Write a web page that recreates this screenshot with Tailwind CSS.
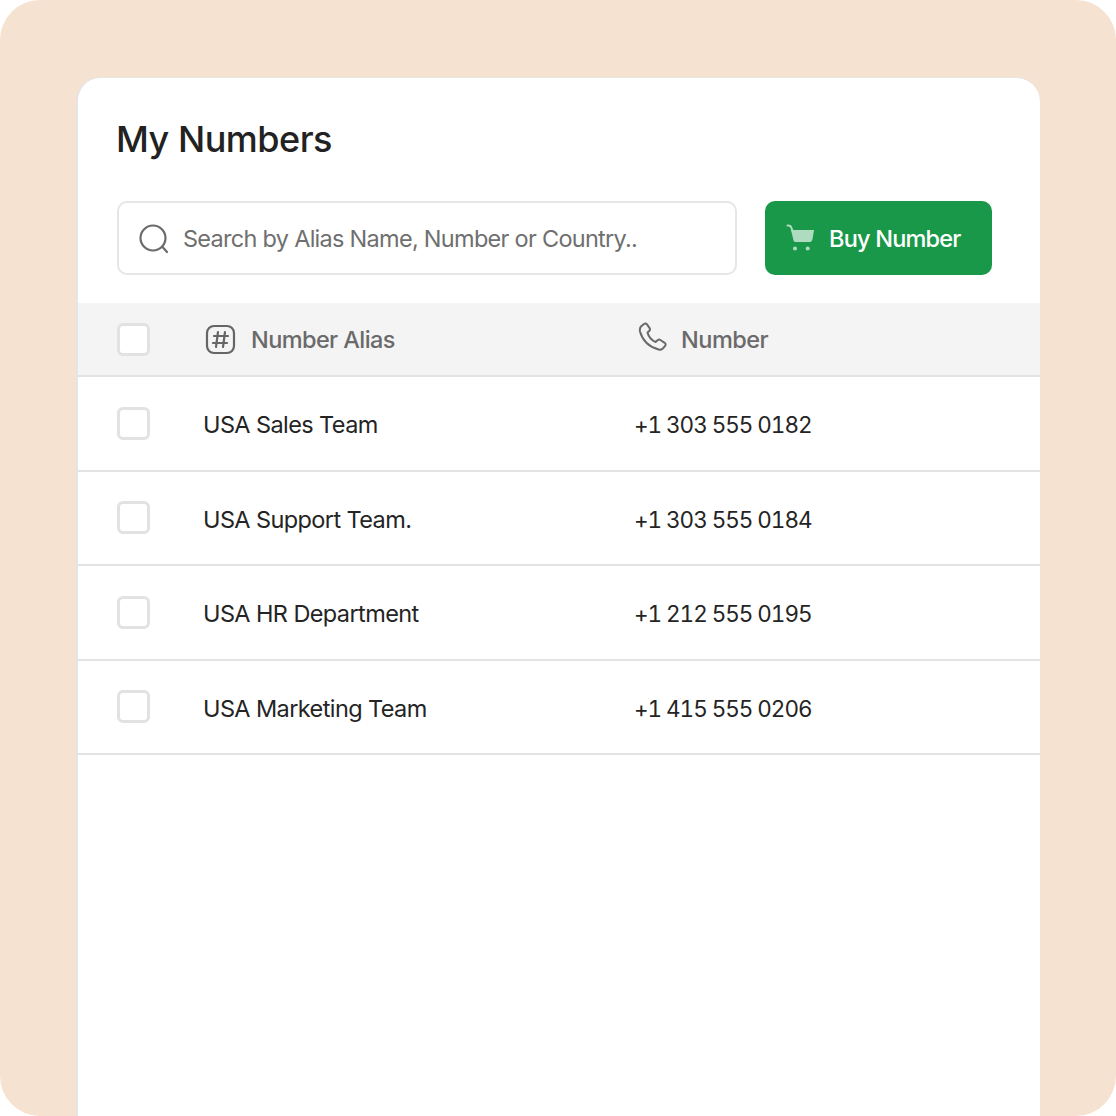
<!doctype html>
<html><head><meta charset="utf-8"><script src="https://cdn.jsdelivr.net/npm/@tailwindcss/browser@4"></script></head>
<body class="bg-white">
<div class="w-[1116px] h-[1116px] overflow-hidden rounded-[40px] bg-[#f5e2d1] pl-[76px] pr-[76px] pt-[77px] font-['Inter',sans-serif]">
  <div class="h-[1039px] rounded-t-[24px] border-l-2 border-t border-[#e5e5e5] bg-white">
    <h1 class="pl-[38px] pt-[39px] text-[36px] leading-[44px] font-medium tracking-[-0.5px] text-[#222222]">My Numbers</h1>
    <div class="mt-[40px] flex items-start pl-[39px]">
      <div class="flex h-[74px] w-[620px] items-center gap-[13px] rounded-[10px] border-2 border-[#e6e6e6] pl-[19px]">
        <svg class="mt-[2px] h-[32px] w-[32px]" viewBox="0 0 32 32" fill="none" stroke="#6b6b6b" stroke-width="2.2" stroke-linecap="round"><circle cx="15" cy="15" r="12.5"/><path d="M24.5 24 29 29"/></svg>
        <span class="pt-[2px] text-[23.5px] tracking-[-0.72px] text-[#6f6f6f]">Search by Alias Name, Number or Country..</span>
      </div>
      <button class="ml-[28px] flex h-[74px] w-[227px] items-center gap-[15px] rounded-[10px] bg-[#199849] pl-[21px]">
        <svg class="h-[28px] w-[28px]" viewBox="0 0 28 28" fill="none"><path d="M1.500 1.500h1c1.500 0 2.500 1 3 2.500L7 8" stroke="#afdcc0" stroke-width="2" stroke-linecap="round"/><path d="M5 6h23l-1.500 9c-.2 1.500-1 3-2.500 3H9.500c-1 0-1.800-.7-2-1.800z" fill="#afdcc0"/><circle cx="9" cy="24.500" r="2" fill="#afdcc0"/><circle cx="21.700" cy="24.500" r="2" fill="#afdcc0"/></svg>
        <span class="pt-[2px] text-[23.5px] font-medium tracking-[-0.8px] text-white">Buy Number</span>
      </button>
    </div>
    <div class="mt-[28px] flex h-[74px] items-center border-b-2 border-[#e3e3e3] bg-[#f4f4f4]">
      <span class="ml-[39px] h-[33px] w-[33px] rounded-[6px] border-[3px] border-[#e2e2e2] bg-white"></span>
      <span class="ml-[54px] flex w-[434px] items-center gap-[15px]">
        <svg class="h-[32px] w-[32px]" viewBox="0 0 32 32" fill="none" stroke="#666666" stroke-width="2.2" stroke-linecap="round"><rect x="3" y="3" width="27" height="27" rx="7"/><path d="M10 13h14M9 20h14M14 9l-2 15M21 9l-2 15"/></svg>
        <span class="pt-[2px] text-[23.5px] font-medium tracking-[-0.6px] text-[#6a6a6a]">Number Alias</span>
      </span>
      <span class="flex items-center gap-[13px]">
        <svg class="-mt-[5px] h-[30px] w-[30px]" viewBox="0 0 30 30" fill="none" stroke="#6a6a6a" stroke-width="2" stroke-linejoin="round"><path d="M3 4.500 6 2c1-.8 2.200-.6 3 .4l2.600 3.700c.6 1 .5 2-.4 2.800L9.500 10.400c1 4 3.800 7.500 8.100 9.600l2-1.800c.8-.7 1.900-.8 2.800-.2l4.300 2.800c1 .7 1.300 2 .4 3l-1.900 2.400c-1 1.300-2.700 1.800-4.500 1.300C11 25 4.500 18.500 2 9.500c-.4-2 0-3.800 1-5z"/></svg>
        <span class="pt-[2px] text-[23.5px] font-medium tracking-[-0.5px] text-[#6a6a6a]">Number</span>
      </span>
    </div>
    <div class="flex h-[94.500px] items-center border-b-2 border-[#e3e3e3]">
      <span class="ml-[39px] h-[33px] w-[33px] rounded-[6px] border-[3px] border-[#e2e2e2] bg-white"></span>
      <span class="ml-[53px] w-[431px] pt-[3px] text-[23.5px] tracking-[-0.6px] text-[#242424]">USA Sales Team</span>
      <span class="pt-[4px] text-[22.5px] tabular-nums tracking-[-1.05px] text-[#242424]">+1 303 555 0182</span>
    </div>
    <div class="flex h-[94.500px] items-center border-b-2 border-[#e3e3e3]">
      <span class="ml-[39px] h-[33px] w-[33px] rounded-[6px] border-[3px] border-[#e2e2e2] bg-white"></span>
      <span class="ml-[53px] w-[431px] pt-[3px] text-[23.5px] tracking-[-0.6px] text-[#242424]">USA Support Team.</span>
      <span class="pt-[4px] text-[22.5px] tabular-nums tracking-[-1.05px] text-[#242424]">+1 303 555 0184</span>
    </div>
    <div class="flex h-[94.500px] items-center border-b-2 border-[#e3e3e3]">
      <span class="ml-[39px] h-[33px] w-[33px] rounded-[6px] border-[3px] border-[#e2e2e2] bg-white"></span>
      <span class="ml-[53px] w-[431px] pt-[3px] text-[23.5px] tracking-[-0.6px] text-[#242424]">USA HR Department</span>
      <span class="pt-[4px] text-[22.5px] tabular-nums tracking-[-1.05px] text-[#242424]">+1 212 555 0195</span>
    </div>
    <div class="flex h-[94.500px] items-center border-b-2 border-[#e3e3e3]">
      <span class="ml-[39px] h-[33px] w-[33px] rounded-[6px] border-[3px] border-[#e2e2e2] bg-white"></span>
      <span class="ml-[53px] w-[431px] pt-[3px] text-[23.5px] tracking-[-0.6px] text-[#242424]">USA Marketing Team</span>
      <span class="pt-[4px] text-[22.5px] tabular-nums tracking-[-1.05px] text-[#242424]">+1 415 555 0206</span>
    </div>
  </div>
</div>
</body></html>
